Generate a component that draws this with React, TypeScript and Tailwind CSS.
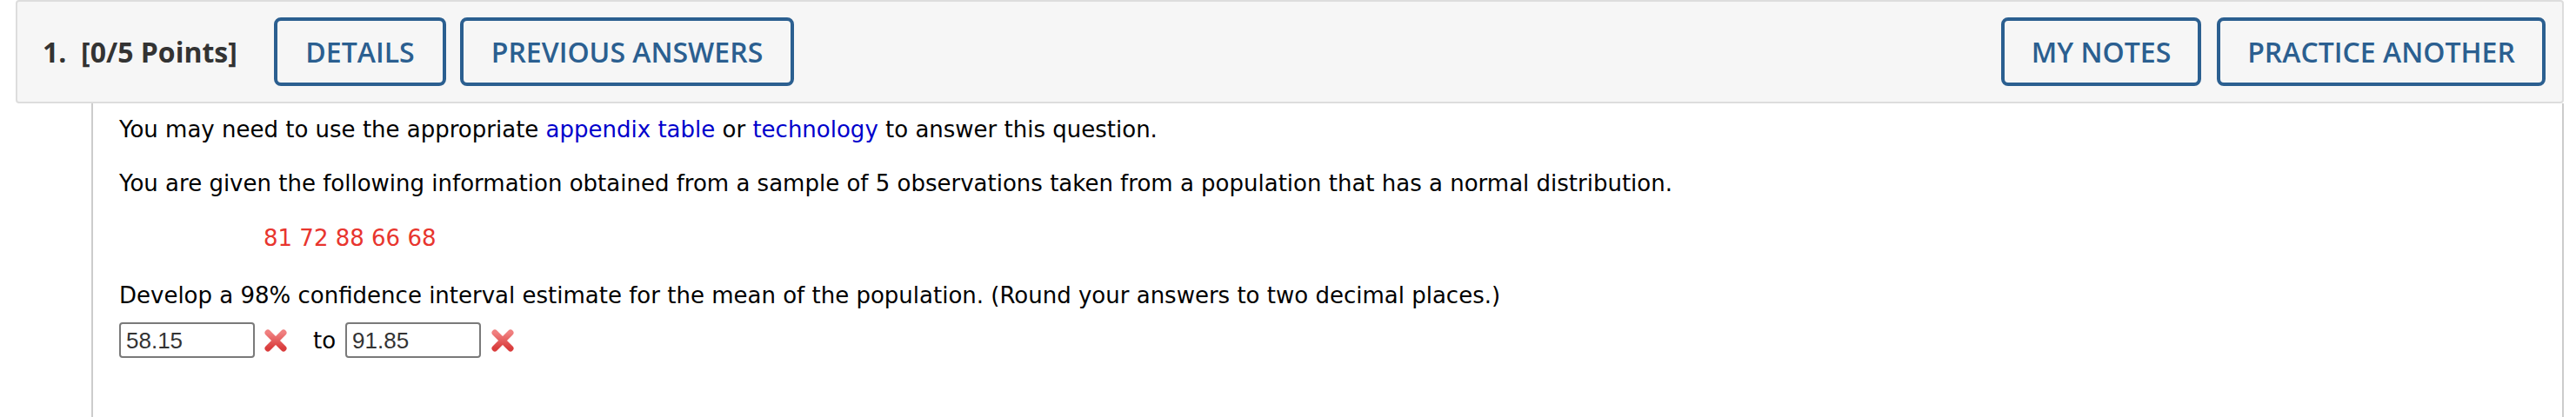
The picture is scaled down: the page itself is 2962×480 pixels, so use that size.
import React from "react";

function RedX() {
  return (
    <svg width="28" height="26" viewBox="0 0 28 26" className="shrink-0">
      <defs>
        <linearGradient id="xg" x1="0" y1="0" x2="0" y2="1">
          <stop offset="0" stopColor="#f08080" />
          <stop offset="1" stopColor="#d93c3c" />
        </linearGradient>
      </defs>
      <path d="M5 4 L23 22 M23 4 L5 22" stroke="url(#xg)" strokeWidth="7" strokeLinecap="round" fill="none" />
    </svg>
  );
}

function HeaderButton({ label, w }: { label: string; w: string }) {
  return (
    <div
      className={`${w} h-[79px] shrink-0 flex items-center justify-center border-4 border-[#2b5f90] rounded-[8px] text-[#2b5f90] text-[32px] font-semibold`}
      style={{ fontFamily: '"Open Sans", sans-serif' }}
    >
      {label}
    </div>
  );
}

function AnswerBox({ value }: { value: string }) {
  return (
    <div
      className="w-[156px] h-[41px] shrink-0 border-2 border-[#7a7a7a] rounded-[4px] bg-white flex items-center pl-[6px] text-[26px] text-[#333]"
      style={{ fontFamily: '"Liberation Sans", Arial, sans-serif' }}
    >
      {value}
    </div>
  );
}

export default function App() {
  return (
    <div className="w-[2962px] h-[480px] bg-white overflow-hidden">
      <div className="ml-[18px] mr-[14px] h-[119px] border-2 border-[#dddddd] rounded-[4px] bg-[#f6f6f6] flex items-center pl-[29px] pr-[19px]">
        <div
          className="w-[266px] shrink-0 text-[32px] font-bold text-[#333] whitespace-pre"
          style={{ fontFamily: '"Open Sans", sans-serif' }}
        >
          {"1.  [0/5 Points]"}
        </div>
        <div className="flex gap-[16px]">
          <HeaderButton label="DETAILS" w="w-[198px]" />
          <HeaderButton label="PREVIOUS ANSWERS" w="w-[384px]" />
        </div>
        <div className="ml-auto flex gap-[18px]">
          <HeaderButton label="MY NOTES" w="w-[230px]" />
          <HeaderButton label="PRACTICE ANOTHER" w="w-[378px]" />
        </div>
      </div>
      <div
        className="ml-[105px] mr-[14px] h-[361px] border-l-2 border-r-2 border-[#cccccc] pl-[30px] pt-[15px] text-[26px] leading-[30px] text-black"
        style={{ fontFamily: '"DejaVu Sans", Verdana, sans-serif' }}
      >
        <p>
          You may need to use the appropriate <span className="text-[#0000cc]">appendix table</span> or{" "}
          <span className="text-[#0000cc]">technology</span> to answer this question.
        </p>
        <p className="mt-[32px]">
          You are given the following information obtained from a sample of 5 observations taken from a population that has a normal distribution.
        </p>
        <p className="mt-[33px] ml-[166px] text-[#e8352e]">81 72 88 66 68</p>
        <p className="mt-[36px]">
          Develop a 98% confidence interval estimate for the mean of the population. (Round your answers to two decimal places.)
        </p>
        <div className="mt-[16px] flex items-center">
          <AnswerBox value="58.15" />
          <div className="ml-[10px]">
            <RedX />
          </div>
          <span className="ml-[29px]">to</span>
          <div className="ml-[11px]">
            <AnswerBox value="91.85" />
          </div>
          <div className="ml-[11px]">
            <RedX />
          </div>
        </div>
      </div>
    </div>
  );
}
